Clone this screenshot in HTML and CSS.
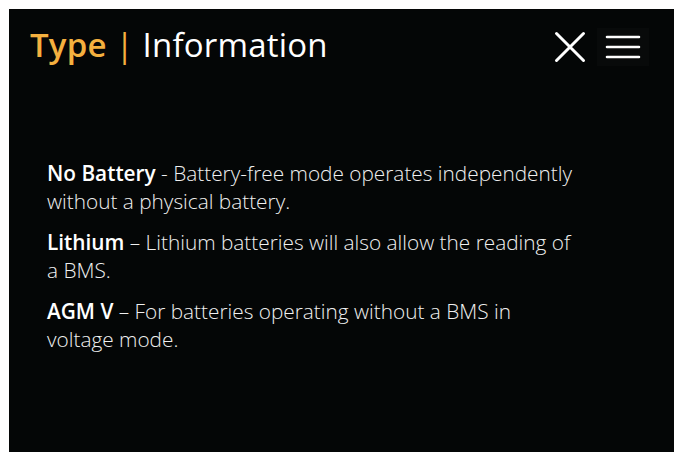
FILE: index.html
```html
<!DOCTYPE html>
<html lang="en">
<head>
<meta charset="utf-8">
<title>Type | Information</title>
<link rel="stylesheet" href="styles.css">
</head>
<body>
<div class="panel">
  <header class="header">
    <h1 class="title"><span class="accent">Type</span> <span class="pipe">|</span> Information</h1>
    <div class="actions">
      <button class="icon-btn close" aria-label="Close">
        <svg width="32" height="32" viewBox="0 0 32 32"><path d="M2.5 2.5 L29.5 29.5 M29.5 2.5 L2.5 29.5" stroke="#fff" stroke-width="3" stroke-linecap="round" fill="none"/></svg>
      </button>
      <button class="icon-btn menu" aria-label="Menu">
        <svg width="36" height="26" viewBox="0 0 36 26"><path d="M2 3 H34 M2 13 H34 M2 23 H34" stroke="#fff" stroke-width="2.6" stroke-linecap="round" fill="none"/></svg>
      </button>
    </div>
  </header>
  <main class="content">
    <p class="item"><strong>No Battery</strong> - Battery-free mode operates independently without a physical battery.</p>
    <p class="item"><strong>Lithium</strong> – Lithium batteries will also allow the reading of a BMS.</p>
    <p class="item"><strong>AGM V</strong> – For batteries operating without a BMS in voltage mode.</p>
  </main>
</div>
</body>
</html>
```
FILE: styles.css
```css
html, body {
  margin: 0;
  padding: 0;
  background: #ffffff;
}
body {
  padding: 9px;
  font-family: "Open Sans", "Noto Sans", sans-serif;
}
.panel {
  width: 665px;
  height: 443px;
  background: #040606;
  color: #ffffff;
  box-sizing: border-box;
}
.header {
  display: flex;
  justify-content: space-between;
  align-items: flex-start;
  padding: 13px 0 0 21px;
}
.title {
  margin: 0;
  font-size: 33px;
  font-weight: 400;
  line-height: 45px;
  letter-spacing: 0.2px;
}
.accent {
  color: #f4b03f;
  font-weight: 600;
}
.pipe {
  color: #f4b03f;
}
.actions {
  display: flex;
  align-items: center;
  gap: 7px;
  padding: 6px 25px 0 0;
}
.icon-btn {
  background: transparent;
  border: 0;
  padding: 0;
  margin: 0;
  display: flex;
  align-items: center;
  justify-content: center;
  cursor: pointer;
}
.close {
  width: 40px;
  height: 38px;
}
.menu {
  width: 52px;
  height: 38px;
  background: #080a0a;
}
.content {
  padding: 92px 0 0 38px;
}
.item {
  margin: 0 0 13px;
  max-width: 535px;
  font-size: 20.8px;
  line-height: 28px;
  font-weight: 300;
  color: #f0f0f0;
}
.item strong {
  font-weight: 600;
  color: #ffffff;
}
```
